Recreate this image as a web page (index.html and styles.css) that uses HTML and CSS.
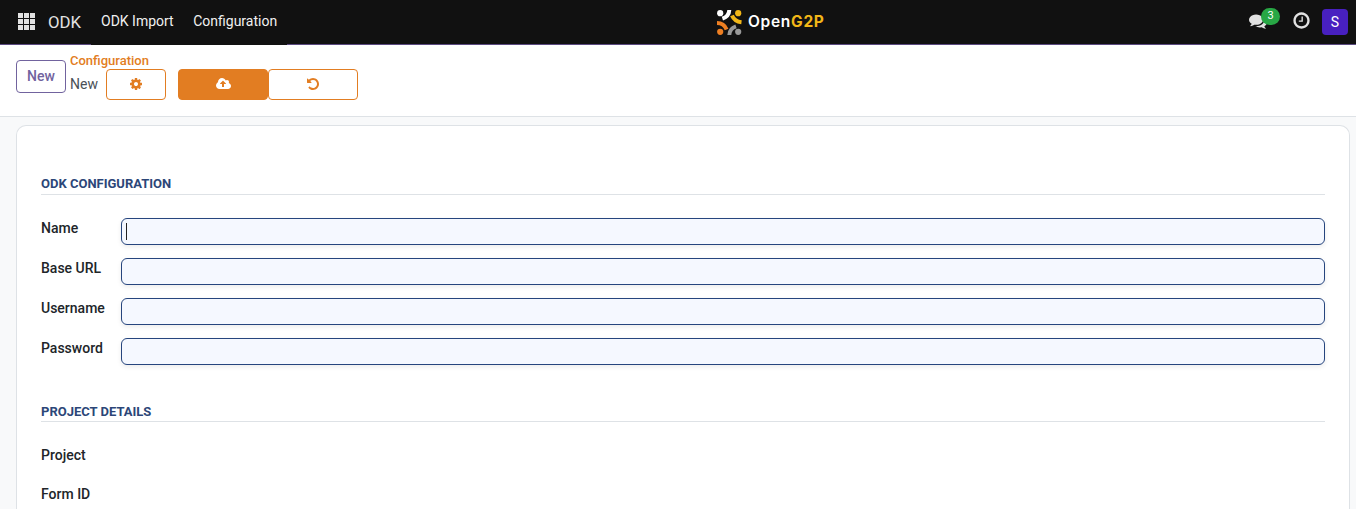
FILE: index.html
```html
<!DOCTYPE html>
<html lang="en">
<head>
<meta charset="utf-8">
<title>ODK Configuration</title>
<link rel="stylesheet" href="styles.css">
</head>
<body>
<header class="navbar">
  <nav class="menu">
    <svg class="apps" width="18" height="18" viewBox="0 0 18 18"><path d="M0 0h5v5H0zM6 0h5v5H6zM12 0h5v5h-5zM0 6h5v5H0zM6 6h5v5H6zM12 6h5v5h-5zM0 12h5v5H0zM6 12h5v5H6zM12 12h5v5h-5z"/></svg>
    <span class="brand">ODK</span>
    <div class="sections"><a>ODK Import</a><a>Configuration</a></div>
  </nav>
  <div class="logo">
    <svg width="25" height="26" viewBox="0 0 25 26" fill="none" stroke-width="4">
      <circle cx="3.2" cy="3.2" r="3.1" fill="#fff"/><circle cx="21.2" cy="3.2" r="3.1" fill="#f2b718"/>
      <circle cx="3.2" cy="21.8" r="3.1" fill="#ee7f22"/><circle cx="21.2" cy="21.8" r="3.1" fill="#999"/>
      <path d="M12.300 0Q12 6.500 5.400 8.600" stroke="#fff"/><path d="M15 5.500Q17.500 11.500 24.500 12.300" stroke="#f2b718"/>
      <path d="M0 13Q7 13 9.600 19.500" stroke="#ee7f22"/><path d="M12.300 25Q12.500 18.500 19 16.300" stroke="#999"/>
    </svg>
    <span class="logo-text">Open<b>G2P</b></span>
  </div>
  <div class="systray">
    <div class="messages">
      <svg width="18" height="18" viewBox="0 0 1792 1792"><path d="M1408 768q0 139-94 257t-256.500 186.500-353.500 68.500q-86 0-176-16-124 88-278 128-36 9-86 16h-3q-11 0-20.500-8t-11.500-21q-1-3-1-6.500t.5-6.500 2-6l2.500-5 3.500-5.500 4-5 4.500-5 4-4.500q5-6 23-25t26-29.500 22.500-29 25-38.500 20.500-44q-124-72-195-177t-71-224q0-139 94-257t256.500-186.500 353.500-68.500 353.500 68.500 256.500 186.500 94 257zm384 256q0 120-71 224.500t-195 176.500q10 24 20.500 44t25 38.500 22.500 29 26 29.500 23 25q1 1 4 4.500t4.500 5 4 5 3.500 5.500l2.500 5 2 6 .5 6.500-1 6.500q-3 14-13 22t-22 7q-50-7-86-16-154-40-278-128-90 16-176 16-271 0-472-132 58 4 88 4 161 0 309-45t264-129q125-92 192-212t67-254q0-77-23-152 129 71 204 178t75 230z"/></svg>
      <span class="badge">3</span>
    </div>
    <svg class="clock" width="19" height="19" viewBox="0 0 1792 1792"><path d="M1024 544v448q0 14-9 23t-23 9h-320q-14 0-23-9t-9-23v-64q0-14 9-23t23-9h224v-352q0-14 9-23t23-9h64q14 0 23 9t9 23zm416 352q0-148-73-273t-198-198-273-73-273 73-198 198-73 273 73 273 198 198 273 73 273-73 198-198 73-273zm224 0q0 209-103 385.500t-279.500 279.500-385.500 103-385.500-103-279.500-279.500-103-385.500 103-385.500 279.500-279.500 385.500-103 385.500 103 279.500 279.500 103 385.500z"/></svg>
    <span class="avatar">S</span>
  </div>
</header>
<section class="control-panel">
  <button class="btn new">New</button>
  <div class="breadcrumb">
    <a>Configuration</a>
    <div class="current">
      <span>New</span>
      <button class="btn cog"><svg width="14" height="14" viewBox="0 0 1792 1792"><path d="M1152 896q0-106-75-181t-181-75-181 75-75 181 75 181 181 75 181-75 75-181zm512-109v222q0 12-8 23t-20 13l-185 28q-19 54-39 91 35 50 107 138 10 12 10 25t-9 23q-27 37-99 108t-94 71q-12 0-26-9l-138-108q-44 23-91 38-16 136-29 186-7 28-36 28h-222q-14 0-24.500-8.500t-11.500-21.500l-28-184q-49-16-90-37l-141 107q-10 9-25 9-14 0-25-11-126-114-165-168-7-10-7-23 0-12 8-23 15-21 51-66.500t54-70.500q-27-50-41-99l-183-27q-13-2-21-12.500t-8-23.500v-222q0-12 8-23t19-13l186-28q14-46 39-92-40-57-107-138-10-12-10-24 0-10 9-23 26-36 98.500-107.500t94.500-71.500q13 0 26 10l138 107q44-23 91-38 16-136 29-186 7-28 36-28h222q14 0 24.500 8.500t11.500 21.500l28 184q49 16 90 37l142-107q9-9 24-9 13 0 25 10 129 119 165 170 7 8 7 22 0 12-8 23-15 21-51 66.500t-54 70.500q26 50 41 98l183 28q13 2 21 12.500t8 23.500z"/></svg></button>
      <button class="btn save"><svg width="15" height="14" viewBox="-64 0 1920 1792"><path d="M1216 864q0-14-9-23l-352-352q-9-9-23-9t-23 9l-351 351q-10 12-10 24 0 14 9 23t23 9h224v352q0 13 9.500 22.500t22.500 9.500h192q13 0 22.500-9.500t9.500-22.500v-352h224q13 0 22.500-9.500t9.500-22.500zm640 288q0 159-112.500 271.500t-271.500 112.500h-1088q-185 0-316.500-131.500t-131.500-316.500q0-130 70-240t188-165q-2-30-2-43 0-212 150-362t362-150q156 0 285.500 87t188.500 231q71-62 166-62 106 0 181 75t75 181q0 76-41 138 130 31 213.500 135.500t83.500 238.500z"/></svg></button>
      <button class="btn discard"><svg width="14" height="14" viewBox="0 0 1792 1792"><path d="M1664 896q0 156-61 298t-164 245-245 164-298 61q-172 0-327-72.500t-264-204.500q-7-10-6.500-22.500t8.500-20.500l137-138q10-9 25-9 16 2 23 12 73 95 179 147t225 52q104 0 198.500-40.500t163.500-109.500 109.500-163.500 40.500-198.500-40.500-198.500-109.500-163.500-163.500-109.500-198.500-40.500q-98 0-188 35.500t-160 101.500l137 138q31 30 14 69-17 40-59 40h-448q-26 0-45-19t-19-45v-448q0-42 40-59 39-17 69 14l130 129q107-101 244.500-156.500t284.500-55.500q156 0 298 61t245 164 164 245 61 298z"/></svg></button>
    </div>
  </div>
</section>
<main class="content">
  <div class="sheet">
    <h2>ODK Configuration</h2>
    <div class="fields">
      <label>Name</label><div class="input"><i class="caret"></i></div>
      <label>Base URL</label><div class="input"></div>
      <label>Username</label><div class="input"></div>
      <label>Password</label><div class="input"></div>
    </div>
    <h2>Project Details</h2>
    <div class="details">
      <label>Project</label>
      <label>Form ID</label>
    </div>
  </div>
</main>
</body>
</html>
```
FILE: styles.css
```css
* { box-sizing: border-box; }
body {
  margin: 0;
  height: 509px;
  overflow: hidden;
  display: flex;
  flex-direction: column;
  background: #f8f9fa;
  color: #212529;
  font: 14px/21px Roboto, sans-serif;
}
svg { display: block; fill: currentColor; }
.navbar {
  flex: none;
  height: 45px;
  display: grid;
  grid-template-columns: 717px auto 1fr;
  background: #111;
  color: #e2e2e2;
  border-bottom: 1px solid #5b4a80;
}
.menu { display: flex; align-items: center; padding-left: 18px; height: 45px; }
.apps { margin-right: 12px; margin-bottom: 1px; }
.brand { font-size: 16.800px; width: 43px; }
.sections {
  display: flex;
  gap: 19.500px;
  height: 45px;
  width: 196px;
  padding-left: 10px;
  line-height: 43px;
  background: #111;
  color: #f0f0f0;
  white-space: nowrap;
}
.logo { display: flex; align-items: center; gap: 6px; }
.logo svg { fill: none; }
.logo-text { font: 600 15.500px/26px Inter, sans-serif; color: #fff; letter-spacing: .7px; margin-top: -1px; }
.logo-text b { font-weight: 700; color: #f2b718; }
.systray { display: flex; justify-content: flex-end; align-items: center; padding: 0 8px 1px 0; }
.messages { position: relative; margin: 0 25px 2px 0; }
.badge {
  position: absolute;
  left: 12px;
  top: -4px;
  width: 19px;
  height: 17px;
  border-radius: 9px;
  background: #28a745;
  color: #fff;
  font-size: 11px;
  line-height: 15px;
  text-align: center;
}
.clock { margin: 0 11px 3px 0; }
.avatar {
  width: 26px;
  height: 26px;
  border-radius: 4px;
  background: #4820c0;
  color: #fff;
  font-size: 14px;
  line-height: 26px;
  text-align: center;
}
.control-panel {
  flex: none;
  display: flex;
  gap: 4px;
  height: 72px;
  padding: 5px 16px 0;
  background: #fff;
  border-bottom: 1px solid #dee2e6;
}
.btn {
  display: flex;
  align-items: center;
  justify-content: center;
  padding: 0;
  height: 31px;
  border: 1px solid #e27d22;
  border-radius: 4px;
  background: #fff;
  color: #e27d22;
}
.btn svg { margin-bottom: 1px; }
.new {
  width: 50px;
  height: 33px;
  margin-top: 10px;
  padding-bottom: 1px;
  border-color: #71639e;
  color: #71639e;
  font: 500 14px Roboto, sans-serif;
}
.breadcrumb a { display: block; height: 19px; line-height: 21px; font-size: 13px; font-weight: 500; color: #e27d22; }
.current { display: flex; color: #495057; line-height: 31px; }
.current span { width: 36px; }
.cog { width: 60px; margin-right: 12px; }
.save { width: 90px; background: #e27d22; color: #fff; }
.discard { width: 90px; }
.content { flex: 1; min-height: 0; display: flex; padding: 8px 6px 0 16px; }
.sheet {
  flex: 1;
  padding: 48px 24px 0;
  border: 1px solid #dee2e6;
  border-bottom: 0;
  border-radius: 10px 10px 0 0;
  background: #fff;
}
h2 {
  margin: 0;
  height: 21px;
  border-bottom: 1px solid #dee2e6;
  font-size: 13px;
  line-height: 20px;
  font-weight: 700;
  text-transform: uppercase;
  color: #2c4678;
}
.fields + h2 { line-height: 21px; }
.fields {
  display: grid;
  grid-template-columns: 80px 1204px;
  row-gap: 13px;
  padding: 23px 0 36px;
}
label { font-weight: 500; color: #212529; }
.fields label { line-height: 20px; }
.input {
  height: 27px;
  padding: 4px;
  border: 1px solid #26457e;
  border-radius: 6px;
  background: #f5f8ff;
  box-shadow: 0 2px 5px rgba(0, 0, 0, .08);
}
.caret { display: block; width: 1px; height: 17px; background: #222; }
.details { display: grid; row-gap: 18px; padding-top: 23px; }
```
